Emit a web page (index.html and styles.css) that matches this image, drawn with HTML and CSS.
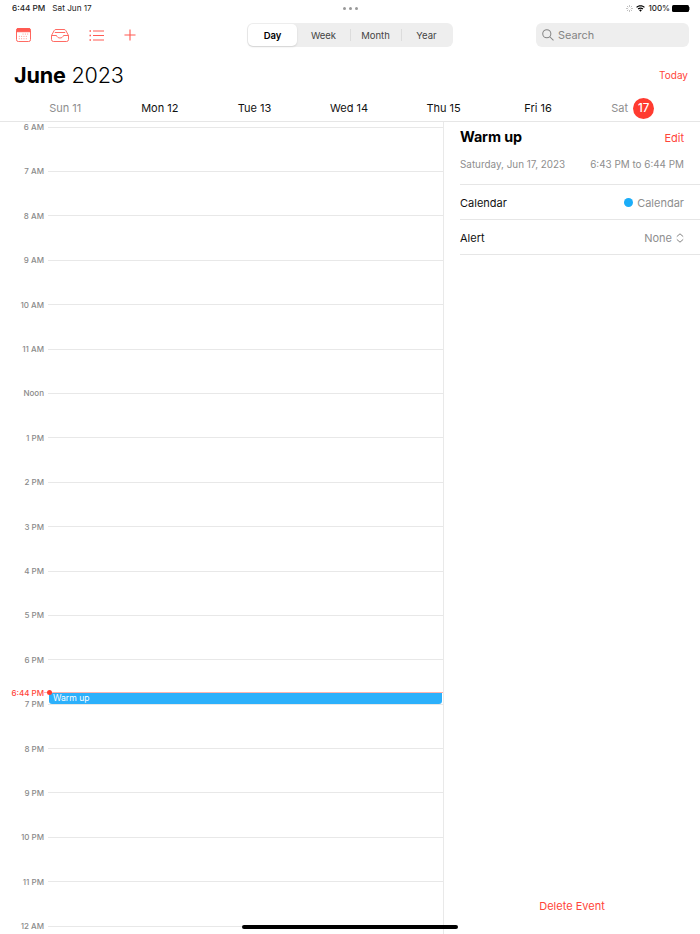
FILE: index.html
```html
<!DOCTYPE html>
<html lang="en">
<head>
    <meta charset="UTF-8">
    <title>Calendar</title>
    <link rel="stylesheet" href="styles.css">
</head>
<body>
    <div class="status-bar">
        <div class="status-left">
            <span class="status-time">6:44 PM</span>
            <span class="status-date">Sat Jun 17</span>
        </div>
        <div class="status-dots"><i></i><i></i><i></i></div>
        <div class="status-right">
            <svg width="7" height="7" viewBox="0 0 9 9" fill="none" stroke="#999" stroke-width="1.200">
                <path d="M4.500 0.500v1.600M4.500 6.900v1.600M0.500 4.500h1.600M6.900 4.500h1.600M1.700 1.700l1.100 1.100M6.200 6.200l1.100 1.100M1.700 7.300l1.100-1.100M6.200 2.800l1.100-1.100"/>
            </svg>
            <svg width="9" height="7" viewBox="0 0 11 8" fill="#000">
                <path d="M5.500 0C3.400 0 1.600 0.800 0.200 2.100l1 1.100C2.300 2.100 3.800 1.500 5.500 1.500s3.200 0.600 4.300 1.700l1-1.100C9.400 0.800 7.600 0 5.500 0z"/>
                <path d="M5.500 2.700c-1.300 0-2.500 0.500-3.400 1.400l1 1.100c0.600-0.600 1.500-1 2.400-1s1.800 0.400 2.400 1l1-1.100C8 3.200 6.800 2.700 5.500 2.700z"/>
                <path d="M5.500 5.300c-0.700 0-1.200 0.200-1.600 0.700L5.500 8l1.600-2C6.700 5.500 6.200 5.300 5.500 5.300z"/>
            </svg>
            <span class="status-battery-text">100%</span>
            <span class="battery"><span class="battery-fill"></span></span>
        </div>
    </div>

    <header class="toolbar">
        <div class="toolbar-icons">
            <svg width="15" height="14" viewBox="0 0 16 15" fill="none" stroke="#ff5a52" stroke-width="1">
                <rect x="0.500" y="0.500" width="15" height="14" rx="2"/>
                <path d="M1 1.500a1 1 0 0 1 1-1h12a1 1 0 0 1 1 1V4H1z" fill="#ff5a52"/>
                <path d="M7 6.500h1M9.500 6.500h1M12 6.500h1M3 9h1M5.500 9h1M8 9h1M10.500 9h1M3 11.500h1M5.500 11.500h1M8 11.500h1M10.500 11.500h1" opacity="0.7"/>
            </svg>
            <svg width="18" height="13" viewBox="0 0 18 13" fill="none" stroke="#ff5a52" stroke-width="0.900">
                <path d="M0.500 6.500L3.200 1.500a2 2 0 0 1 1.700-1h8.200a2 2 0 0 1 1.700 1l2.700 5V10.500a2 2 0 0 1-2 2h-13a2 2 0 0 1-2-2z"/>
                <path d="M0.500 6.500H5.500C6 8 7.300 9 9 9s3-1 3.500-2.500H17.500"/>
                <path d="M3.800 3.500H14.200"/>
            </svg>
            <svg width="15" height="11" viewBox="0 0 15 11" fill="none" stroke="#ff5a52" stroke-width="1">
                <path d="M4 1h11M4 5.500h11M4 10h11"/>
                <path d="M0.500 1h1.500M0.500 5.500h1.500M0.500 10h1.500" stroke-width="1.300"/>
            </svg>
            <svg width="12" height="12" viewBox="0 0 13 13" fill="none" stroke="#ff5a52" stroke-width="1.200">
                <path d="M6.500 0.500v12M0.500 6.500h12"/>
            </svg>
        </div>
        <div class="segments">
            <span class="segment segment-active">Day</span>
            <span class="segment segment-week">Week</span>
            <span class="segment segment-split">Month</span>
            <span class="segment segment-split">Year</span>
        </div>
        <div class="search">
            <svg width="12" height="12" viewBox="0 0 13 13" fill="none" stroke="#848484" stroke-width="1.100">
                <circle cx="5.200" cy="5.200" r="4.400"/>
                <path d="M8.400 8.400l4 4"/>
            </svg>
            <span>Search</span>
        </div>
    </header>

    <div class="title-row">
        <h1><b>June</b> 2023</h1>
        <span class="today">Today</span>
    </div>

    <div class="week-row">
        <span class="day day-off">Sun 11</span>
        <span class="day">Mon 12</span>
        <span class="day">Tue 13</span>
        <span class="day">Wed 14</span>
        <span class="day">Thu 15</span>
        <span class="day">Fri 16</span>
        <span class="day day-off">Sat <em class="day-badge">17</em></span>
    </div>

    <main class="content">
        <section class="timeline">
            <div class="hour"><span>6 AM</span><i></i></div>
            <div class="hour"><span>7 AM</span><i></i></div>
            <div class="hour"><span>8 AM</span><i></i></div>
            <div class="hour"><span>9 AM</span><i></i></div>
            <div class="hour"><span>10 AM</span><i></i></div>
            <div class="hour"><span>11 AM</span><i></i></div>
            <div class="hour"><span>Noon</span><i></i></div>
            <div class="hour"><span>1 PM</span><i></i></div>
            <div class="hour"><span>2 PM</span><i></i></div>
            <div class="hour"><span>3 PM</span><i></i></div>
            <div class="hour"><span>4 PM</span><i></i></div>
            <div class="hour"><span>5 PM</span><i></i></div>
            <div class="hour"><span>6 PM</span><i></i></div>
            <div class="hour"><span>7 PM</span><i></i></div>
            <div class="hour"><span>8 PM</span><i></i></div>
            <div class="hour"><span>9 PM</span><i></i></div>
            <div class="hour"><span>10 PM</span><i></i></div>
            <div class="hour"><span>11 PM</span><i></i></div>
            <div class="hour"><span>12 AM</span><i></i></div>

            <div class="event">Warm up</div>
            <div class="now">
                <span class="now-label">6:44 PM</span>
                <span class="now-dot"></span>
            </div>
        </section>

        <aside class="details">
            <div class="details-head">
                <h2>Warm up</h2>
                <span class="edit">Edit</span>
            </div>
            <div class="details-when">
                <span>Saturday, Jun 17, 2023</span>
                <span>6:43 PM to 6:44 PM</span>
            </div>
            <div class="details-row">
                <span>Calendar</span>
                <span class="row-value"><i class="cal-dot"></i>Calendar</span>
            </div>
            <div class="details-row">
                <span>Alert</span>
                <span class="row-value">None
                    <svg width="8" height="10" viewBox="0 0 8 10" fill="none" stroke="#848484" stroke-width="1">
                        <path d="M0.800 3.600L4 0.800l3.200 2.800M0.800 6.400L4 9.200l3.200-2.800"/>
                    </svg>
                </span>
            </div>
            <div class="delete">Delete Event</div>
        </aside>
    </main>

    <div class="home-bar"></div>
</body>
</html>
```

FILE: styles.css
```css
* {
    box-sizing: border-box;
}

html, body {
    height: 100%;
}

body {
    margin: 0;
    background: white;
    color: black;
    font-family: Inter, "Liberation Sans", sans-serif;
    overflow: hidden;
    display: flex;
    flex-direction: column;
}

/* status bar */
.status-bar {
    height: 18px;
    padding: 0 11px 2px 12px;
    display: flex;
    align-items: center;
    justify-content: space-between;
    font-size: 8.200px;
    color: #222;
    position: relative;
}

.status-left {
    display: flex;
    gap: 7px;
}

.status-time {
    font-weight: 500;
}

.status-dots {
    display: flex;
    gap: 3px;
    position: absolute;
    left: 343px;
    top: 7px;
}

.status-dots i {
    width: 3px;
    height: 3px;
    border-radius: 50%;
    background: #999;
}

.status-right {
    display: flex;
    align-items: center;
    gap: 3px;
}

.status-battery-text {
    font-weight: 500;
    font-size: 8px;
}

.battery {
    width: 17px;
    height: 7px;
    margin-left: -1px;
    position: relative;
    display: block;
}

.battery::after {
    content: "";
    position: absolute;
    right: -1px;
    top: 2px;
    width: 1px;
    height: 3px;
    background: #999;
}

.battery-fill {
    display: block;
    height: 100%;
    background: black;
    border-radius: 1.500px;
}

/* toolbar */
.toolbar {
    height: 34px;
    padding: 5px 11px 5px 16px;
    display: flex;
    align-items: center;
}

.toolbar-icons {
    width: 231px;
    display: flex;
    align-items: center;
    gap: 20px;
}

.segments {
    width: 206px;
    height: 24px;
    padding: 1px;
    background: #eeeeee;
    border-radius: 6px;
    display: flex;
    font-size: 9.500px;
    color: #444;
}

.segment {
    flex: 1;
    display: flex;
    align-items: center;
    justify-content: center;
    position: relative;
}

.segment-active {
    flex: 0 0 49px;
    background: white;
    border-radius: 5px;
    box-shadow: 0 1px 2px rgba(0, 0, 0, 0.12);
    font-weight: 600;
    color: black;
}

.segment-week {
    flex: 0 0 53px;
}

.segment-split::before {
    content: "";
    position: absolute;
    left: 0;
    top: 5px;
    bottom: 5px;
    width: 1px;
    background: #dcdcdc;
}

.search {
    width: 153px;
    height: 24px;
    margin-left: 83px;
    padding-left: 6px;
    background: #eeeeee;
    border-radius: 6px;
    display: flex;
    align-items: center;
    gap: 4px;
    font-size: 10.900px;
    color: #848484;
}

/* title */
.title-row {
    height: 45px;
    padding: 0 12px 0 14px;
    display: flex;
    align-items: center;
    justify-content: space-between;
}

h1 {
    margin: 0;
    font-size: 21.600px;
    font-weight: 300;
    letter-spacing: -0.2px;
}

h1 b {
    font-weight: 700;
}

.today {
    font-size: 10px;
    color: #ff453a;
}

/* days */
.week-row {
    height: 25px;
    padding: 0 20px 2px 18px;
    display: grid;
    grid-template-columns: repeat(7, 1fr);
    align-items: center;
    border-bottom: 1px solid #e6e6e6;
}

.day {
    text-align: center;
    font-size: 11px;
    color: #111;
    white-space: nowrap;
}

.day-off {
    color: #8e8e8e;
}

.day-badge {
    display: inline-block;
    width: 21px;
    height: 21px;
    margin-left: 2px;
    line-height: 21px;
    border-radius: 50%;
    background: #ff3b30;
    color: white;
    font-size: 11.500px;
    font-style: normal;
    font-weight: 500;
    vertical-align: middle;
}

/* main area */
.content {
    flex: 1;
    min-height: 0;
    display: flex;
}

.timeline {
    width: 443px;
    padding-top: 4.600px;
    position: relative;
}

.hour {
    height: 44.400px;
    display: flex;
}

.hour span {
    width: 44px;
    height: 10px;
    margin-top: -4.500px;
    text-align: right;
    font-size: 8px;
    line-height: 10px;
    font-weight: 500;
    color: #8a8a8a;
}

.hour i {
    flex: 1;
    margin-left: 4px;
    border-top: 1px solid #e8e8e8;
}

.event {
    position: absolute;
    left: 49px;
    right: 1px;
    top: 571px;
    height: 11px;
    padding-left: 4px;
    background: #2cb0fb;
    border-radius: 0 0 3px 3px;
    color: white;
    font-size: 8.600px;
    line-height: 11px;
}

.now {
    position: absolute;
    left: 0;
    right: 0;
    top: 566px;
    height: 10px;
    display: flex;
    align-items: center;
}

.now::after {
    content: "";
    position: absolute;
    left: 44px;
    right: 0;
    top: 4px;
    height: 1px;
    background: #ffb3ae;
}

.now-label {
    width: 44px;
    background: white;
    text-align: right;
    font-size: 8px;
    line-height: 10px;
    font-weight: 500;
    color: #ff453a;
}

.now-dot {
    position: absolute;
    left: 47px;
    top: 2px;
    width: 5px;
    height: 5px;
    border-radius: 50%;
    background: #ff3b30;
    z-index: 1;
}

/* side panel */
.details {
    flex: 1;
    padding-left: 16px;
    border-left: 1px solid #e9e9e9;
    background: white;
    display: flex;
    flex-direction: column;
}

.details-head {
    height: 34px;
    padding: 0 16px 5px 0;
    display: flex;
    align-items: center;
    justify-content: space-between;
}

h2 {
    margin: 0;
    font-size: 14.300px;
    font-weight: 700;
    letter-spacing: -0.1px;
}

.edit {
    font-size: 11px;
    color: #ff453a;
    padding-top: 2px;
}

.details-when {
    height: 29px;
    padding: 0 16px 12px 0;
    display: flex;
    align-items: center;
    justify-content: space-between;
    font-size: 9.900px;
    color: #8e8e8e;
    border-bottom: 1px solid #e6e6e6;
}

.details-row {
    height: 35px;
    padding: 1px 16px 0 0;
    display: flex;
    align-items: center;
    justify-content: space-between;
    font-size: 11px;
    color: #111;
    border-bottom: 1px solid #e6e6e6;
}

.row-value {
    display: flex;
    align-items: center;
    gap: 4px;
    color: #8e8e8e;
}

.cal-dot {
    width: 9px;
    height: 9px;
    border-radius: 50%;
    background: #1badf8;
}

.delete {
    margin-top: auto;
    margin-left: -16px;
    margin-bottom: 21px;
    text-align: center;
    font-size: 11px;
    color: #ff453a;
}

.home-bar {
    position: absolute;
    left: 242px;
    top: 925px;
    width: 216px;
    height: 4px;
    border-radius: 2px;
    background: black;
}
```
